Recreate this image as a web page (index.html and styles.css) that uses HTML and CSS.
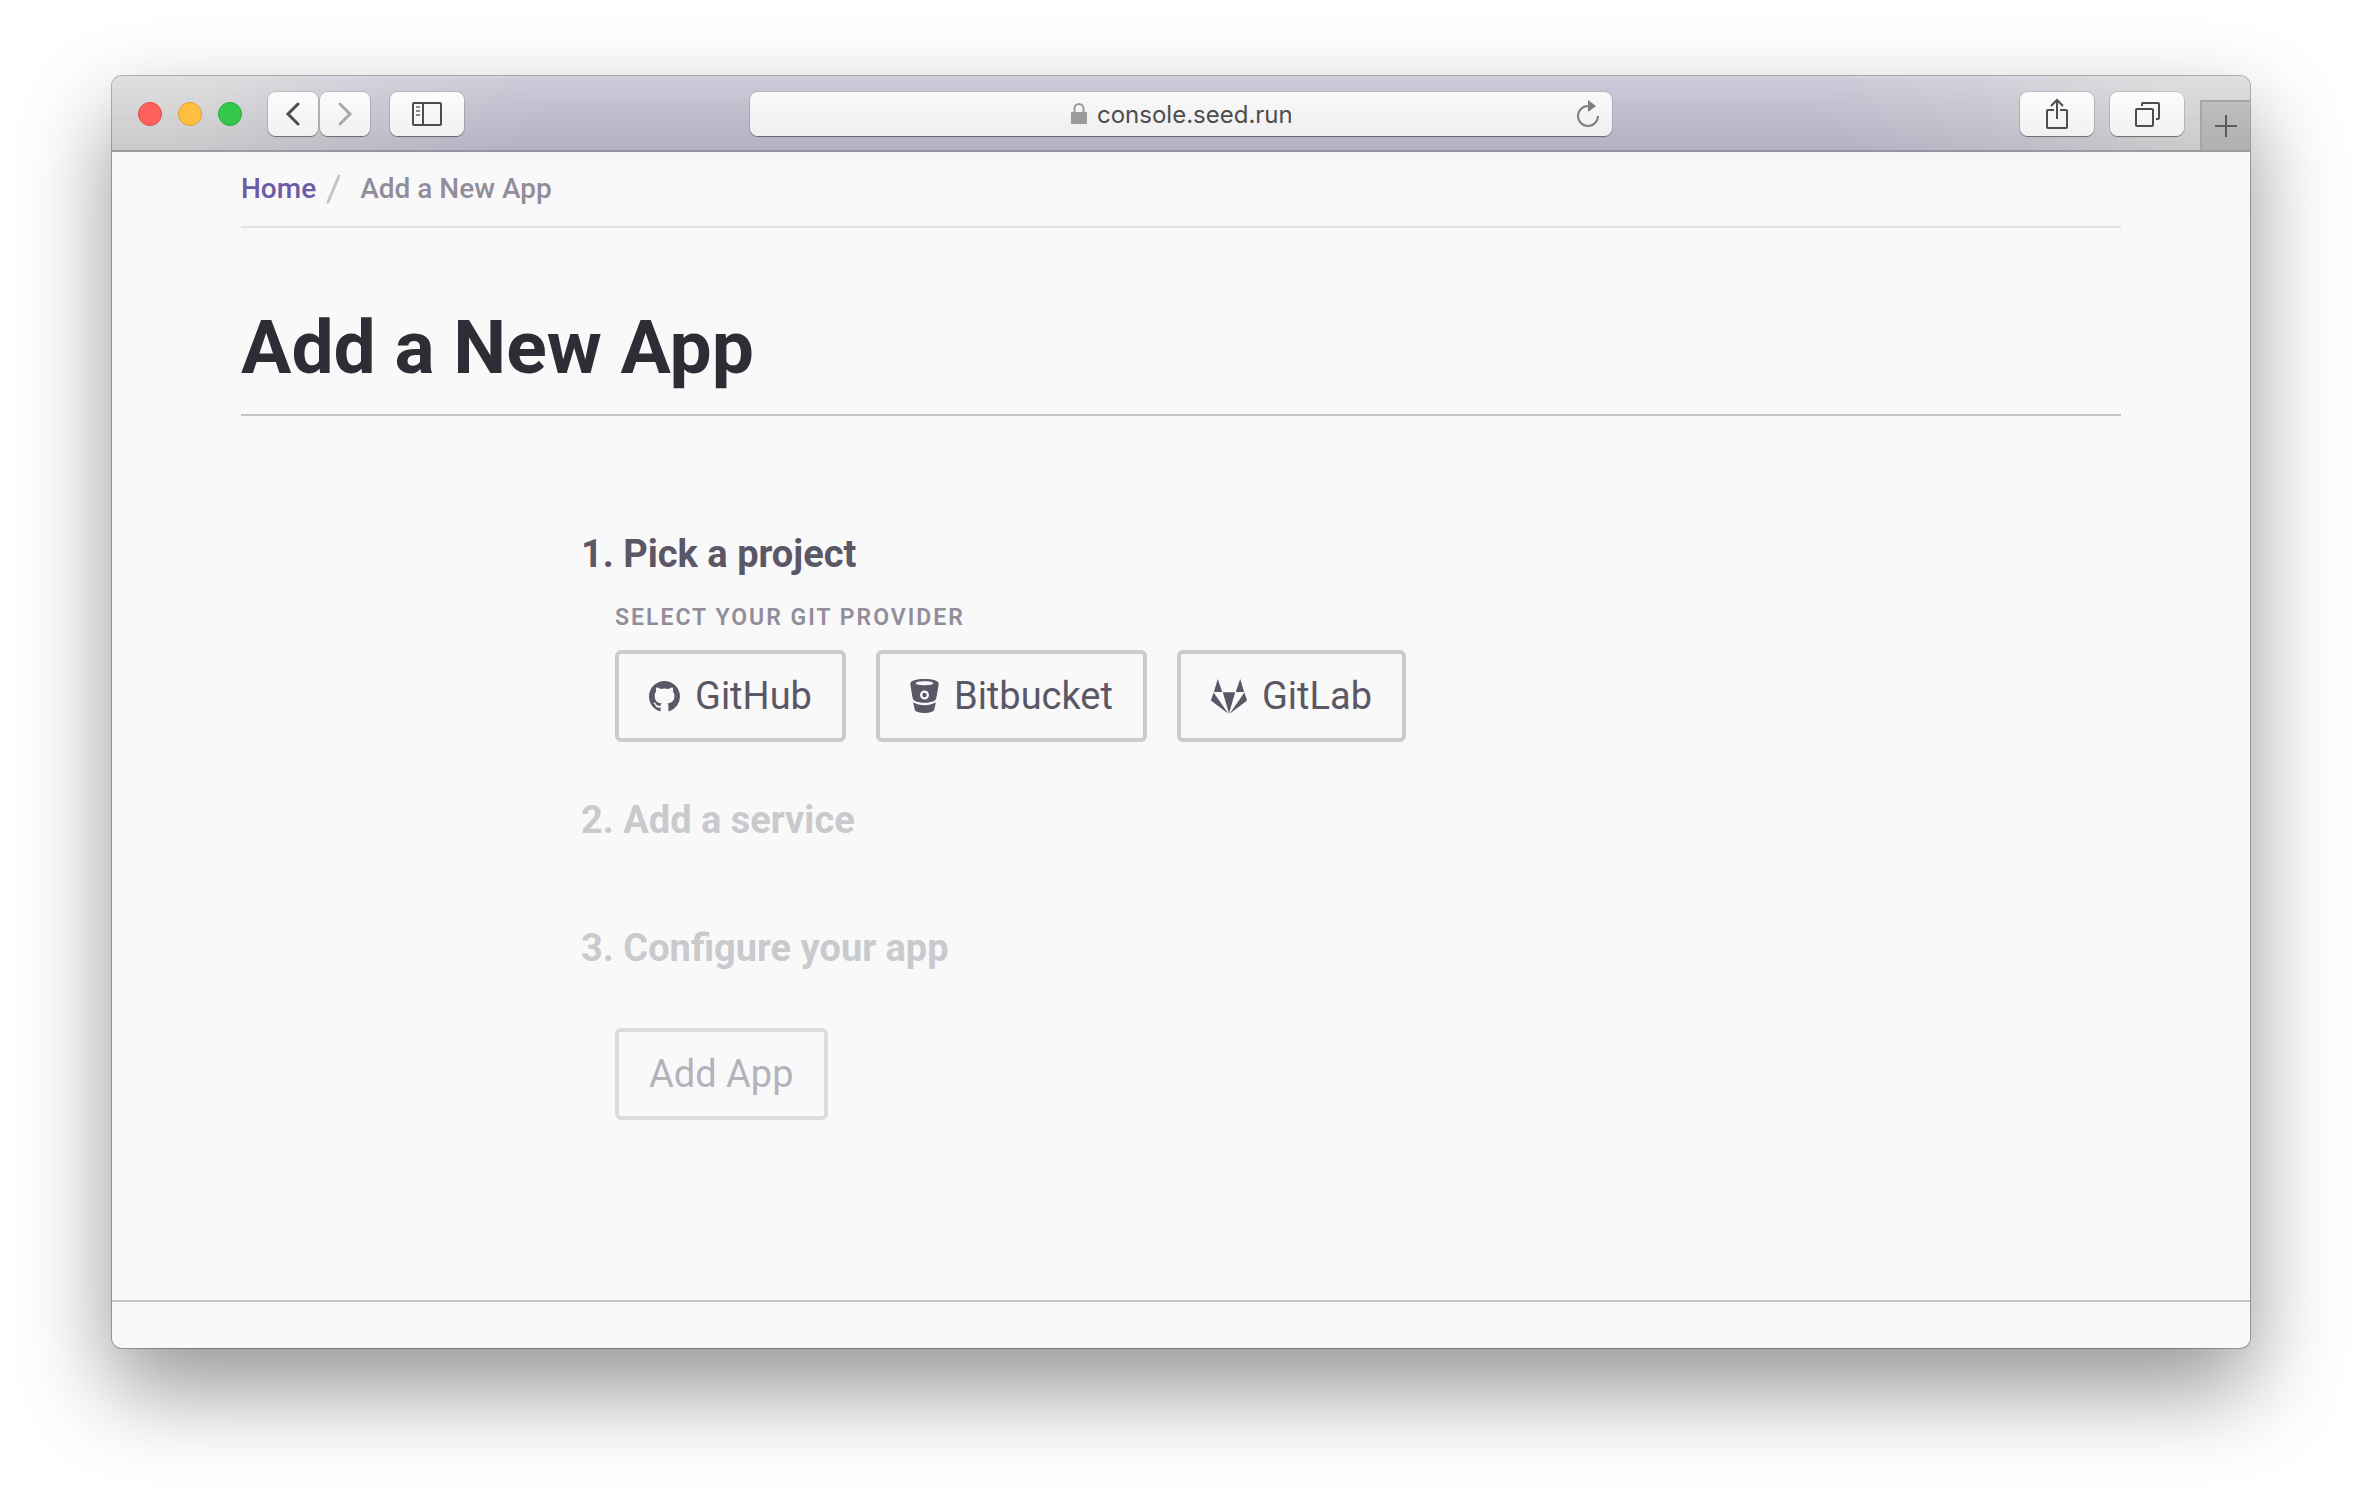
FILE: index.html
```html
<!DOCTYPE html>
<html lang="en">
<head>
<meta charset="utf-8">
<title>Add a New App</title>
<link rel="stylesheet" href="styles.css">
</head>
<body>
<div class="window">
  <header class="toolbar">
    <div class="toolbar-left">
      <div class="lights">
        <span class="light light-close"></span>
        <span class="light light-minimise"></span>
        <span class="light light-zoom"></span>
      </div>
      <div class="history">
        <button class="tool tool-narrow" type="button" aria-label="Back">
          <svg width="16" height="26" viewBox="0 0 16 26"><path d="M13 3 3 13l10 10" fill="none" stroke="#4d4d4d" stroke-width="3" stroke-linecap="round"/></svg>
        </button>
        <button class="tool tool-narrow" type="button" aria-label="Forward">
          <svg width="16" height="26" viewBox="0 0 16 26"><path d="M3 3l10 10L3 23" fill="none" stroke="#a9a9a9" stroke-width="3" stroke-linecap="round"/></svg>
        </button>
      </div>
      <button class="tool" type="button" aria-label="Show sidebar">
        <svg width="30" height="24" viewBox="0 0 30 24" fill="none" stroke="#4d4d4d" stroke-width="2"><rect x="1" y="1" width="28" height="22" rx="1"/><path d="M11 1v22"/><path d="M4 5h4M4 9h4M4 13h4" stroke="#8a8a8a"/></svg>
      </button>
    </div>
    <label class="address">
      <svg width="16" height="22" viewBox="0 0 16 22"><path d="M3.500 9V5.500a4.500 4.500 0 0 1 9 0V9" fill="none" stroke="#9b9b9b" stroke-width="2"/><rect x="0" y="9" width="16" height="12" rx="1" fill="#9b9b9b"/></svg>
      <input class="address-input" type="text" value="console.seed.run" aria-label="Address">
      <button class="reload" type="button" aria-label="Reload">
        <svg width="26" height="28" viewBox="0 0 26 28"><path d="M13 6a10 10 0 1 0 10 10" fill="none" stroke="#7f7f7f" stroke-width="2"/><path d="M13 0v12l8-6z" fill="#7f7f7f"/></svg>
      </button>
    </label>
    <div class="toolbar-right">
      <button class="tool" type="button" aria-label="Share">
        <svg width="24" height="32" viewBox="0 0 24 32" fill="none" stroke="#4d4d4d" stroke-width="2"><path d="M9 12H3a1 1 0 0 0-1 1v16a1 1 0 0 0 1 1h18a1 1 0 0 0 1-1V13a1 1 0 0 0-1-1h-6"/><path d="M12 21V2M6 8l6-6 6 6"/></svg>
      </button>
      <button class="tool" type="button" aria-label="Show tabs">
        <svg width="26" height="26" viewBox="0 0 26 26" fill="none" stroke="#4d4d4d" stroke-width="2"><rect x="2" y="8" width="17" height="17" rx="1"/><path d="M8 5V3a1 1 0 0 1 1-1h15a1 1 0 0 1 1 1v14a1 1 0 0 1-1 1h-2"/></svg>
      </button>
      <button class="new-tab" type="button" aria-label="New tab">
        <svg width="22" height="22" viewBox="0 0 22 22"><path d="M11 0v22M0 11h22" stroke="#5c5c5c" stroke-width="2"/></svg>
      </button>
    </div>
  </header>

  <main class="page">
    <div class="container">
      <div class="nav-edge"></div>
      <nav class="breadcrumb" aria-label="Breadcrumb">
        <a class="breadcrumb-link" href="#">Home</a>
        <svg class="breadcrumb-divider" width="16" height="30" viewBox="0 0 16 30"><path d="M2 28 13 2" stroke="#c5c4cb" stroke-width="3" stroke-linecap="round"/></svg>
        <span>Add a New App</span>
      </nav>
      <h1 class="title">Add a New App</h1>

      <form class="steps">
        <section class="step">
          <h2 class="step-title">1. Pick a project</h2>
          <div class="step-body">
            <p class="caption" id="provider">Select your git provider</p>
            <div class="providers" role="group" aria-labelledby="provider">
              <button class="btn" type="button">
                <svg width="31" height="31" viewBox="0 0 16 16"><path fill="currentColor" d="M8 0C3.580 0 0 3.580 0 8c0 3.540 2.290 6.530 5.470 7.590.4.070.55-.17.55-.38 0-.19-.01-.82-.01-1.490-2.010.37-2.530-.49-2.690-.94-.09-.23-.48-.94-.82-1.130-.28-.15-.68-.52-.01-.53.63-.01 1.080.58 1.230.82.72 1.210 1.870.87 2.330.66.070-.52.28-.87.51-1.070-1.780-.2-3.640-.89-3.640-3.950 0-.87.31-1.590.82-2.150-.08-.2-.36-1.020.08-2.120 0 0 .67-.21 2.200.82.64-.18 1.320-.27 2-.27s1.360.09 2 .27c1.530-1.040 2.200-.82 2.200-.82.44 1.100.16 1.920.08 2.120.51.56.82 1.270.82 2.150 0 3.070-1.870 3.750-3.650 3.950.29.25.54.73.54 1.480 0 1.070-.01 1.930-.01 2.200 0 .21.15.46.55.38A8.010 8.010 0 0 0 16 8c0-4.420-3.580-8-8-8z"/></svg>
                GitHub
              </button>
              <button class="btn" type="button">
                <svg width="29" height="34" viewBox="0 0 29 34"><path fill="currentColor" fill-rule="evenodd" d="M14.500 0C6 0 .3 1.800.3 4.500c0 1 2 13.500 2.700 15.500.8 2.200 5.500 3.700 11.500 3.700S25.200 22.200 26 20c.7-2 2.700-14.500 2.700-15.500C28.700 1.800 23 0 14.500 0zm0 2.200c5 0 8.800.8 8.800 2s-3.800 2-8.800 2-8.800-.8-8.800-2 3.800-2 8.800-2zm0 9.300a4.500 4.500 0 1 1 0 9 4.500 4.500 0 0 1 0-9z"/><circle cx="14.500" cy="16" r="2.200" fill="currentColor"/><path fill="currentColor" d="M3.800 23.500c3 2 6.500 2.700 10.700 2.700s7.700-.7 10.700-2.700c.5 0 .6.300.5.800l-1.500 6.500c-.5 2-5 3.200-9.700 3.200s-9.200-1.200-9.700-3.200l-1.500-6.500c-.1-.5 0-.8.5-.8z"/></svg>
                Bitbucket
              </button>
              <button class="btn" type="button">
                <svg width="36" height="35" viewBox="0 0 36 35"><path fill="currentColor" d="M6.800 0 11.300 13H2.800zM29.200 0 33.200 13h-8.500zM11.800 13.300h12.400L18 34.500zM2.600 13.500 17.400 34.800.5 22c-.4-.3-.6-.8-.4-1.300zM33.400 13.500 18.600 34.800 35.500 22c.4-.3.6-.8.4-1.300z"/></svg>
                GitLab
              </button>
            </div>
          </div>
        </section>
        <section class="step step-pending">
          <h2 class="step-title">2. Add a service</h2>
        </section>
        <section class="step step-pending">
          <h2 class="step-title">3. Configure your app</h2>
        </section>
        <div class="actions">
          <button class="btn" type="submit" disabled>Add App</button>
        </div>
      </form>
    </div>
  </main>
  <footer class="footer"></footer>
</div>
</body>
</html>
```
FILE: styles.css
```css
* { box-sizing: border-box; }

body {
  margin: 0;
  padding: 75px 111px 147px;
  background: #fff;
  color: #5b5766;
  font-family: Roboto, "Liberation Sans", sans-serif;
  font-size: 28px;
}

button, input { font: inherit; color: inherit; }
button { padding: 0; border: 0; background: none; }
svg { display: block; flex: none; }
h1, h2, p { margin: 0; }

.window {
  overflow: hidden;
  border: 1px solid rgba(0, 0, 0, .28);
  border-radius: 11px;
  background: #f9f9f9;
  background-clip: padding-box;
  box-shadow: 0 40px 90px rgba(0, 0, 0, .42);
}

.toolbar {
  display: grid;
  grid-template-columns: 1fr minmax(0, 862px) 1fr;
  align-items: center;
  height: 76px;
  border-top: 2px solid rgba(255, 255, 255, .4);
  border-bottom: 2px solid rgba(80, 75, 95, .45);
  background:
    linear-gradient(rgba(255, 255, 255, .22), rgba(0, 0, 0, .06)),
    linear-gradient(90deg, #d6d6d6 3%, #c9c5d2 12%, #c0bbce 20%, #c0bbce 80%, #c9c5d2 88%, #d6d6d6 97%);
}

.toolbar-left, .toolbar-right, .history, .lights { display: flex; align-items: center; }
.toolbar-left { gap: 20px; padding-left: 26px; }
.toolbar-right { gap: 16px; height: 100%; justify-content: flex-end; }
.lights { gap: 16px; margin-right: 6px; }
.history { gap: 2px; }

.light { width: 24px; height: 24px; border-radius: 50%; }
.light-close { background: #ff605c; border: 1px solid #e2484a; }
.light-minimise { background: #ffbe40; border: 1px solid #e0a033; }
.light-zoom { background: #33c84a; border: 1px solid #25ad38; }

.tool {
  display: flex;
  align-items: center;
  justify-content: center;
  width: 74px;
  height: 44px;
  border-radius: 8px;
  background: linear-gradient(#fcfcfd, #f1f1f2);
  box-shadow: 0 0 0 1px rgba(0, 0, 0, .1), 0 1px 1px rgba(0, 0, 0, .4);
}
.tool-narrow { width: 50px; }

.address {
  position: relative;
  display: flex;
  align-items: center;
  justify-content: center;
  gap: 10px;
  height: 44px;
  border-radius: 8px;
  background: linear-gradient(#f9f9fa, #efeff1);
  box-shadow: 0 0 0 1px rgba(0, 0, 0, .08), 0 1px 1px rgba(0, 0, 0, .4);
}
.address-input {
  width: 194px;
  height: 32px;
  padding: 0;
  border: 0;
  outline: 0;
  background: none;
  color: #4d4d4d;
  font-family: Inter, "Liberation Sans", sans-serif;
  font-size: 24px;
}
.reload { position: absolute; right: 11px; top: 8px; }

.new-tab {
  display: flex;
  align-items: center;
  justify-content: center;
  align-self: flex-end;
  width: 50px;
  height: 50px;
  border-top: 2px solid #a6a6a6;
  border-left: 2px solid #a6a6a6;
  background: linear-gradient(#bebebe, #b0b0b0);
}

.page { overflow: hidden; padding: 0 129px 180px; }
.container { max-width: 1880px; margin: 0 auto; }
.nav-edge { height: 1px; margin-top: -1px; box-shadow: 0 2px 14px rgba(0, 0, 0, .3); }

.breadcrumb {
  display: flex;
  align-items: center;
  padding: 20px 0;
  border-bottom: 2px solid #e2e2e2;
  color: #918d9b;
  font-weight: 500;
  line-height: 34px;
}
.breadcrumb-link { color: #6b5ca5; text-decoration: none; }
.breadcrumb-divider { margin: 0 18px 0 10px; }

.title {
  margin-top: 75px;
  padding-bottom: 23px;
  border-bottom: 2px solid #c5c4cc;
  color: #2e2c34;
  font-size: 75px;
  font-weight: 700;
  line-height: 88px;
}

.steps { max-width: 1200px; margin: 116px auto 0; }
.step-title { font-size: 38px; font-weight: 700; line-height: 44px; }
.step-body { padding: 30px 0 0 34px; }
.step-pending { margin-top: 56px; color: #cac9ce; }
.step-pending + .step-pending { margin-top: 84px; }

.caption {
  margin-bottom: 20px;
  color: #918d9b;
  font-size: 23px;
  font-weight: 600;
  line-height: 24px;
  letter-spacing: 2px;
  text-transform: uppercase;
}

.providers { display: flex; flex-wrap: wrap; gap: 30px; }

.btn {
  display: flex;
  align-items: center;
  gap: 15px;
  height: 92px;
  padding: 0 30px;
  border: 4px solid #cbcbcb;
  border-radius: 6px;
  font-size: 38px;
}
.btn:disabled { border-color: #dcdcdc; color: #b5b2bc; }

.actions { padding: 58px 0 0 34px; }

.footer { height: 48px; border-top: 2px solid #c5c4cc; }
```
